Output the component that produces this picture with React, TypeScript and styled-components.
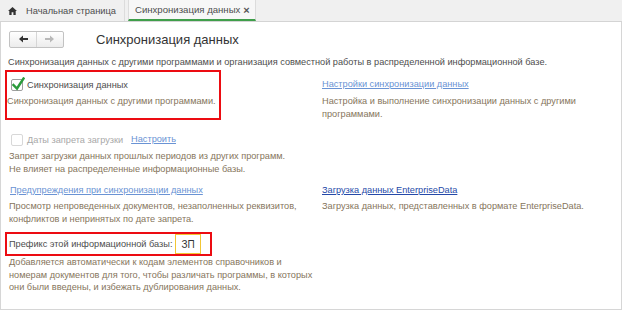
import React from 'react'
import styled, { createGlobalStyle } from 'styled-components'

const GlobalStyle = createGlobalStyle`
  html, body {
    margin: 0;
    padding: 0;
    background: #ffffff;
  }
  body {
    font-family: 'Liberation Sans', Arial, sans-serif;
    font-size: 9.2px;
    color: #4d4d4d;
  }
`

const Window = styled.div`
  width: 622px;
  height: 310px;
  display: flex;
  flex-direction: column;
  box-sizing: border-box;
  overflow: hidden;
`

const TabBar = styled.div`
  display: flex;
  height: 22px;
  background: #f0f0f0;
  border-bottom: 1px solid #d4d4d4;
  box-sizing: border-box;
`

const Tab = styled.div<{ active?: boolean }>`
  display: flex;
  align-items: center;
  gap: 9px;
  height: 21px;
  padding: 0 ${({ active }) => (active ? '5px' : '8px')} 0 ${({ active }) => (active ? '6px' : '8px')};
  box-sizing: border-box;
  color: #4d4d4d;
  font-size: ${({ active }) => (active ? '9.6px' : '9.3px')};
  background: ${({ active }) => (active ? '#f7f7f7' : '#f0f0f0')};
  border-left: ${({ active }) => (active ? '1px solid #dcdcdc' : 'none')};
  border-right: 1px solid #dcdcdc;
  border-bottom: ${({ active }) => (active ? '2px solid #3f9e4a' : 'none')};
  margin-left: ${({ active }) => (active ? '3px' : '0')};
`

const CloseMark = styled.span`
  font-size: 11px;
  font-weight: bold;
  color: #555;
  margin-left: -6px;
`

const Panel = styled.div`
  flex: 1;
  border: 1px solid #d6d6d6;
  border-top: none;
  padding: 0 0 0 6px;
  display: flex;
  flex-direction: column;
`

const Header = styled.div`
  display: flex;
  align-items: center;
  height: 34px;
  padding-left: 2px;
  gap: 32px;
`

const NavGroup = styled.div`
  display: flex;
  height: 17px;
  border: 1px solid #c2c2c2;
  border-radius: 2px;
  background: linear-gradient(#ffffff, #ececec);
  box-sizing: border-box;
`

const NavButton = styled.div<{ disabled?: boolean }>`
  width: 26px;
  display: flex;
  align-items: center;
  justify-content: center;
  color: ${({ disabled }) => (disabled ? '#b8b8b8' : '#333')};
  & + & {
    border-left: 1px solid #d6d6d6;
  }
`

const Title = styled.h1`
  margin: 0;
  font-size: 13px;
  font-weight: normal;
  color: #333;
`

const Intro = styled.div`
  padding-left: 1px;
  line-height: 13px;
  color: #4d4d4d;
`

const Grid = styled.div`
  display: grid;
  grid-template-columns: 315px 1fr;
`

const Cell = styled.div<{ pt?: number }>`
  padding-top: ${({ pt }) => pt ?? 0}px;
  display: flex;
  flex-direction: column;
  align-items: flex-start;
`

const Highlight = styled.div<{ w: number }>`
  width: ${({ w }) => w}px;
  border: 2px solid #ec0c12;
  box-sizing: border-box;
  margin-left: -2px;
  display: flex;
  flex-direction: column;
  align-items: flex-start;
`

const CheckBlock = styled.div`
  padding: 5px 0 10px 0;
  white-space: nowrap;
`

const CheckRow = styled.label<{ disabled?: boolean }>`
  display: flex;
  align-items: center;
  gap: 4px;
  height: 15px;
  padding-left: 4px;
  color: ${({ disabled }) => (disabled ? '#a8a8a8' : '#4d4d4d')};
`

const Box = styled.span<{ disabled?: boolean }>`
  position: relative;
  width: 12px;
  height: 12px;
  border: 1px solid ${({ disabled }) => (disabled ? '#d8d8d8' : '#9e9e9e')};
  border-radius: 2px;
  background: #fff;
  box-sizing: border-box;
  flex: none;
`

const Tick = styled.svg`
  position: absolute;
  left: 0px;
  top: -3px;
`

const Link = styled.a<{ strong?: boolean; indent?: number }>`
  color: ${({ strong }) => (strong ? '#2549a8' : '#6a93d4')};
  text-decoration: underline;
  line-height: 13px;
  margin-left: ${({ indent }) => indent ?? 0}px;
  cursor: pointer;
`

const Note = styled.div<{ mt?: number; indent?: number }>`
  color: #86755c;
  line-height: 12.5px;
  margin-top: ${({ mt }) => mt ?? 0}px;
  padding-left: ${({ indent }) => indent ?? 0}px;
`

const PrefixRow = styled.div`
  display: flex;
  align-items: center;
  gap: 3px;
  height: 20px;
  padding-left: 2px;
  color: #4d4d4d;
  white-space: nowrap;
`

const PrefixInput = styled.div`
  width: 26px;
  height: 20px;
  border: 1px solid #f2c634;
  box-sizing: border-box;
  display: flex;
  align-items: center;
  padding-left: 5px;
  color: #333;
  font-size: 10px;
`

function HomeIcon() {
  return (
    <svg width="9" height="8" viewBox="0 0 10 9">
      <path d="M5 0 L10 4.6 L8.6 4.6 L8.6 9 L6 9 L6 6 L4 6 L4 9 L1.4 9 L1.4 4.6 L0 4.6 Z" fill="#333" />
    </svg>
  )
}

function Arrow({ dir }: { dir: 'left' | 'right' }) {
  const d = dir === 'left' ? 'M1 4 L5 0.5 L5 3 L10 3 L10 5 L5 5 L5 7.5 Z' : 'M9 4 L5 0.5 L5 3 L0 3 L0 5 L5 5 L5 7.5 Z'
  return (
    <svg width="10" height="8" viewBox="0 0 10 8">
      <path d={d} fill="currentColor" />
    </svg>
  )
}

function Checkbox({ checked, disabled }: { checked?: boolean; disabled?: boolean }) {
  return (
    <Box disabled={disabled}>
      {checked && (
        <Tick width="13" height="14" viewBox="0 0 13 14">
          <path d="M1.5 8 L5 11.5 L11.5 1.5" stroke="#2b9b3c" strokeWidth="2.4" fill="none" strokeLinecap="square" />
        </Tick>
      )}
    </Box>
  )
}

export default function App() {
  return (
    <>
      <GlobalStyle />
      <Window>
        <TabBar>
          <Tab>
            <HomeIcon />
            Начальная страница
          </Tab>
          <Tab active>
            Синхронизация данных
            <CloseMark>×</CloseMark>
          </Tab>
        </TabBar>
        <Panel>
          <Header>
            <NavGroup>
              <NavButton>
                <Arrow dir="left" />
              </NavButton>
              <NavButton disabled>
                <Arrow dir="right" />
              </NavButton>
            </NavGroup>
            <Title>Синхронизация данных</Title>
          </Header>
          <Intro>
            Синхронизация данных с другими программами и организация совместной работы в распределенной информационной базе.
          </Intro>
          <Grid>
            <Cell pt={1}>
              <Highlight w={216}>
                <CheckBlock>
                  <CheckRow>
                    <Checkbox checked />
                    Синхронизация данных
                  </CheckRow>
                  <Note mt={3}>Синхронизация данных с другими программами.</Note>
                </CheckBlock>
              </Highlight>
            </Cell>
            <Cell pt={9}>
              <Link>Настройки синхронизации данных</Link>
              <Note mt={4}>
                Настройка и выполнение синхронизации данных с другими
                <br />
                программами.
              </Note>
            </Cell>

            <Cell pt={12}>
              <CheckRow disabled>
                <Checkbox disabled />
                Даты запрета загрузки
                <Link indent={4}>Настроить</Link>
              </CheckRow>
              <Note mt={3} indent={2}>
                Запрет загрузки данных прошлых периодов из других программ.
                <br />
                Не влияет на распределенные информационные базы.
              </Note>
            </Cell>
            <Cell />

            <Cell pt={9}>
              <Link indent={3}>Предупреждения при синхронизации данных</Link>
              <Note mt={3} indent={2}>
                Просмотр непроведенных документов, незаполненных реквизитов,
                <br />
                конфликтов и непринятых по дате запрета.
              </Note>
            </Cell>
            <Cell pt={9}>
              <Link strong>Загрузка данных EnterpriseData</Link>
              <Note mt={3}>Загрузка данных, представленных в формате EnterpriseData.</Note>
            </Cell>

            <Cell pt={7} style={{ gridColumn: '1 / 3' }}>
              <Highlight w={207}>
                <PrefixRow>
                  Префикс этой информационной базы:
                  <PrefixInput>ЗП</PrefixInput>
                </PrefixRow>
              </Highlight>
              <Note indent={2}>
                Добавляется автоматически к кодам элементов справочников и
                <br />
                номерам документов для того, чтобы различать программы, в которых
                <br />
                они были введены, и избежать дублирования данных.
              </Note>
            </Cell>
          </Grid>
        </Panel>
      </Window>
    </>
  )
}
